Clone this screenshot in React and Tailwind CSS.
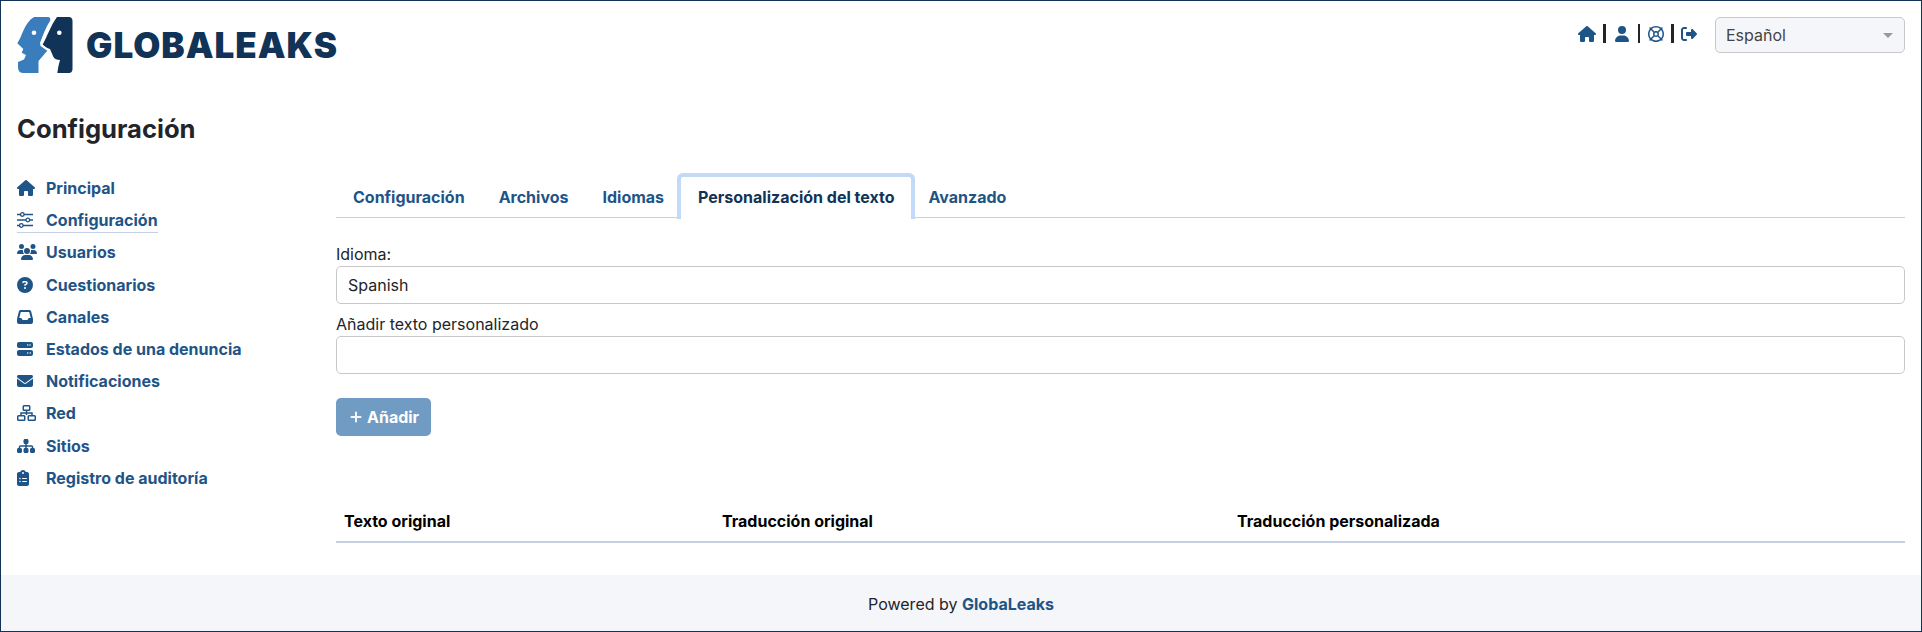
import { FaHouse, FaUser, FaRegLifeRing, FaRightFromBracket, FaUsers, FaCircleQuestion, FaInbox, FaServer, FaEnvelope, FaSitemap, FaClipboardList } from 'react-icons/fa6';
import { BsPlusLg } from 'react-icons/bs';

function SlidersIcon({ className }) {
  return (
    <svg className={className} viewBox="0 0 16 16" fill="none" stroke="currentColor" strokeWidth="1.300">
      <path d="M0 2.500H3.500M7 2.500H16M0 8H9M12.500 8H16M0 13.500H2.500M6 13.500H16" />
      <circle cx="5.300" cy="2.500" r="1.800" />
      <circle cx="10.800" cy="8" r="1.800" />
      <circle cx="4.300" cy="13.500" r="1.800" />
    </svg>
  );
}

function NetworkIcon({ className }) {
  return (
    <svg className={className} viewBox="0 0 19 16" fill="none" stroke="currentColor" strokeWidth="1.500">
      <rect x="6.250" y="0.750" width="6.500" height="4.500" rx="0.800" />
      <path d="M9.500 5.250V10M4 10.500V8H15V10.500" />
      <rect x="0.750" y="10.750" width="7" height="4.500" rx="0.800" />
      <rect x="11.250" y="10.750" width="7" height="4.500" rx="0.800" />
    </svg>
  );
}

const menu = [
  { label: "Principal", icon: FaHouse, size: "w-[18px] h-[16px]" },
  { label: "Configuración", icon: SlidersIcon, size: "w-[16px] h-[16px]", active: true },
  { label: "Usuarios", icon: FaUsers, size: "w-[20px] h-[16px]" },
  { label: "Cuestionarios", icon: FaCircleQuestion, size: "w-[16px] h-[16px]" },
  { label: "Canales", icon: FaInbox, size: "w-[16px] h-[16px]" },
  { label: "Estados de una denuncia", icon: FaServer, size: "w-[16px] h-[16px]" },
  { label: "Notificaciones", icon: FaEnvelope, size: "w-[16px] h-[16px]" },
  { label: "Red", icon: NetworkIcon, size: "w-[19px] h-[16px]" },
  { label: "Sitios", icon: FaSitemap, size: "w-[18px] h-[16px]" },
  { label: "Registro de auditoría", icon: FaClipboardList, size: "w-[12px] h-[16px]" },
];

const tabs = ["Configuración", "Archivos", "Idiomas", "Personalización del texto", "Avanzado"];

function Logo() {
  return (
    <svg width="56" height="56" viewBox="0 0 56 56">
      <path fill="#3a7dbd" d="M17 0H31C33 0 34 2 33 4C29 10 26 18 23 26L23.500 29L30.300 33.700L21.500 44V56H6C2.500 56 1 53 1 50V45L7 42.500L9 38L4.700 35.700L6.300 32L0.300 26.300C5 20 7 6 17 0Z" />
      <path fill="#103357" d="M40 0H52C54 0 55.500 1.500 55.500 4V52C55.500 54.500 54 56 52 56H40.300L41.300 49.700L43 43C40 43 37.500 42 36.300 39.700L33 32C30 31 28 30 25.700 27.500C30 20 34 8 40 0Z" />
      <circle cx="17" cy="15.700" r="2.300" fill="#fff" />
      <circle cx="42.300" cy="15.700" r="2.300" fill="#fff" />
    </svg>
  );
}

export default function App() {
  return (
    <div className="w-[1922px] h-[632px] flex flex-col border border-[#103357] bg-white text-[16px] text-[#212529] font-['Inter',sans-serif] overflow-hidden">
      <header className="flex justify-between pl-4 pr-4 pt-4 h-[92px]">
        <div className="flex items-start">
          <Logo />
          <span className="ml-[13px] mt-[7px] text-[35px] leading-[42px] font-black tracking-[1px] text-[#103357]">GLOBALEAKS</span>
        </div>
        <div className="flex items-start">
          <div className="flex items-center h-[19px] mt-[7px] text-[#1f5487]">
            <FaHouse className="w-[18px] h-[16px]" />
            <span className="ml-[7px] mr-[9.500px] w-[2.500px] h-[19px] bg-[#212529]" />
            <FaUser className="w-[14px] h-[16px]" />
            <span className="ml-[8.500px] mr-[7.500px] w-[2.500px] h-[19px] bg-[#212529]" />
            <FaRegLifeRing className="w-[16px] h-[16px]" />
            <span className="mx-[7.500px] w-[2.500px] h-[19px] bg-[#212529]" />
            <FaRightFromBracket className="w-[16px] h-[16px]" />
          </div>
          <div className="ml-[18px] w-[190px] h-[36px] flex items-center justify-between px-[10px] bg-[#f5f6fa] border border-[#c8c8c8] rounded-[5px] text-[#444]">
            <span>Español</span>
            <span className="mr-[1px] border-x-[5px] border-t-[5px] border-x-transparent border-t-[#999]" />
          </div>
        </div>
      </header>

      <h1 className="pl-4 mt-[21px] text-[25.600px] leading-[30px] font-bold">Configuración</h1>

      <div className="flex flex-1 mt-[28px]">
        <nav className="w-[335px] shrink-0 pl-4 flex flex-col items-start">
          {menu.map((item) => (
            <a key={item.label} className="flex items-center h-[32.200px] font-bold text-[#1f5487]">
              <span className={item.active ? "flex items-center border-b border-[#c5d0e3] h-[25px] pt-[1px]" : "flex items-center"}>
                <span className="w-[29px] shrink-0">
                  <item.icon className={item.size} />
                </span>
                {item.label}
              </span>
            </a>
          ))}
        </nav>

        <main className="w-[1569px]">
          <div className="flex h-[41px] mt-[5px] border-b border-[#ccd0d6]">
            {tabs.map((tab, i) => (
              <a key={tab} className={i === 3
                ? "relative -mx-[4px] -mt-[4px] h-[46px] px-[17px] pt-[8px] leading-[24px] font-bold text-[#103357] border-x-4 border-t-4 border-[#c2d9f7] rounded-t-[6px] bg-white"
                : "px-[17px] pt-[8px] leading-[24px] font-bold text-[#1f5487]"}>{tab}</a>
            ))}
          </div>

          <label className="block mt-[24px] leading-[24px]">Idioma:</label>
          <div className="flex items-center h-[38px] px-[11px] border border-[#c8c8c8] rounded-[5px]">Spanish</div>
          <label className="block mt-[8px] leading-[24px]">Añadir texto personalizado</label>
          <input className="block w-full h-[38px] border border-[#c8c8c8] rounded-[5px]" />

          <button className="flex items-center mt-[24px] h-[38px] pl-[13px] pr-[12px] rounded-[5px] bg-[#709bc3] text-white font-bold">
            <BsPlusLg className="mr-[4px] w-[14px] h-[14px] stroke-current stroke-[1]" />
            Añadir
          </button>

          <div className="grid grid-cols-[378px_515px_1fr] mt-[62px] h-[45px] pl-[8px] pb-[8px] items-end border-b-2 border-[#c5d0e3] leading-[24px] font-bold text-black">
            <span>Texto original</span>
            <span>Traducción original</span>
            <span>Traducción personalizada</span>
          </div>
        </main>
      </div>

      <footer className="h-[56px] pt-[2px] bg-[#f5f6fa] flex items-center justify-center">
        <span>Powered by <a className="font-bold text-[#1f5487]">GlobaLeaks</a></span>
      </footer>
    </div>
  );
}
